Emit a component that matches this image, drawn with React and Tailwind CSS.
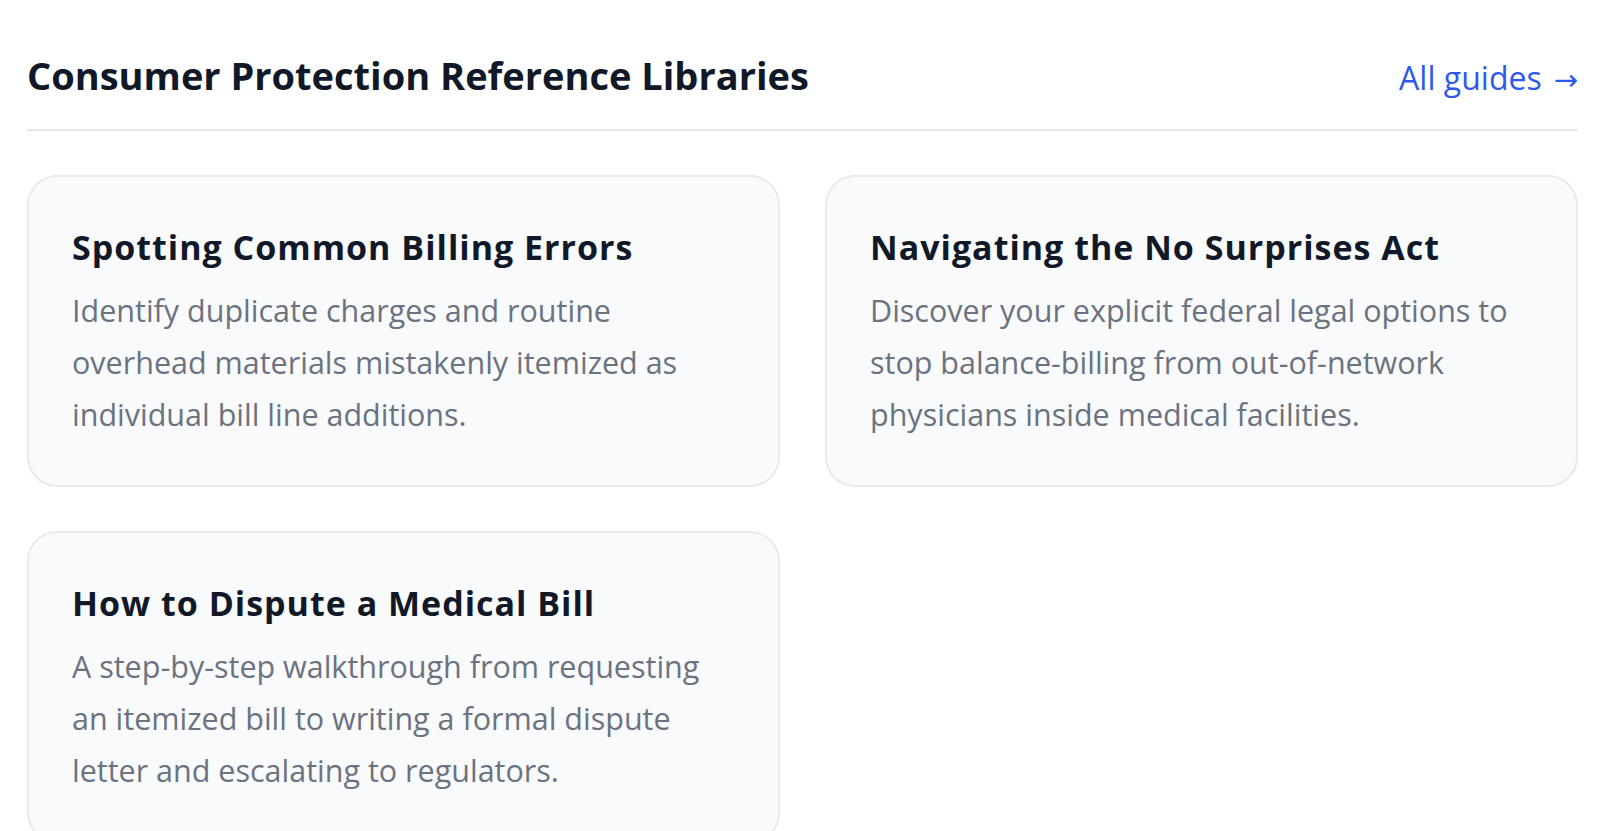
import React from "react";

const guides = [
  {
    title: "Spotting Common Billing Errors",
    body: "Identify duplicate charges and routine overhead materials mistakenly itemized as individual bill line additions.",
  },
  {
    title: "Navigating the No Surprises Act",
    body: "Discover your explicit federal legal options to stop balance-billing from out-of-network physicians inside medical facilities.",
  },
  {
    title: "How to Dispute a Medical Bill",
    body: "A step-by-step walkthrough from requesting an itemized bill to writing a formal dispute letter and escalating to regulators.",
  },
];

const GuideCard = ({ title, body }) => {
  return (
    <div className="rounded-[30px] border-2 border-[#e8eaee] bg-[#f9fafb] pl-[43px] pr-[48px] pt-[48px] pb-[45px]">
      <h3 className="text-[34px] leading-[44px] font-bold tracking-[1px] text-[#111827]">
        {title}
      </h3>
      <p className="mt-[15px] text-[30.5px] leading-[52px] text-[#6b7280]">
        {body}
      </p>
    </div>
  );
};

export default function App() {
  return (
    <div
      className="min-h-screen bg-white pl-[27px] pr-[22px] pt-[51px]"
      style={{ fontFamily: "'Open Sans', sans-serif" }}
    >
      <div className="flex items-baseline justify-between border-b-2 border-[#e5e7eb] pb-[26px]">
        <h2 className="text-[38px] leading-[48px] font-bold text-[#111827]">
          Consumer Protection Reference Libraries
        </h2>
        <a href="#" className="text-[32px] text-[#2f58ee]">
          All guides
          <span style={{ fontFamily: "'DejaVu Sans', sans-serif" }} className="ml-[12px] text-[29px]">
            →
          </span>
        </a>
      </div>

      <div className="mt-[44px] grid grid-cols-2 gap-x-[45px] gap-y-[44px]">
        {guides.map((g) => (
          <GuideCard key={g.title} title={g.title} body={g.body} />
        ))}
      </div>
    </div>
  );
}
